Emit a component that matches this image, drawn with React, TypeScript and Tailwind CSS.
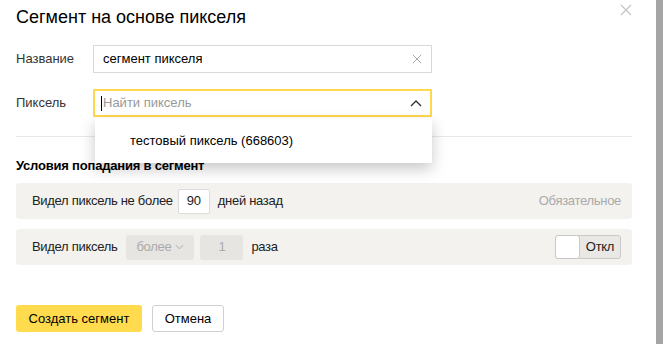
import React from 'react';

const font = { fontFamily: '"Liberation Sans", Arial, sans-serif' };

const CloseIcon = ({ className }: { className?: string }) => (
  <svg viewBox="0 0 12 12" className={className} fill="none" stroke="currentColor" strokeWidth="1.2">
    <path d="M1 1l10 10M11 1L1 11" />
  </svg>
);

export default function App() {
  return (
    <div className="flex h-[344px] w-[663px] overflow-hidden bg-white text-[13px] text-[#222]" style={font}>
      {/* Dialog */}
      <div className="relative w-[656px] pl-4 pr-[24px]">
        <div className="flex h-[40px] items-start justify-between pt-[3px]">
          <h1 className="pt-[2px] text-[18px] font-normal leading-[24px] text-black">Сегмент на основе пикселя</h1>
          <CloseIcon className="mt-[1px] h-[12px] w-[12px] text-[#c4c4c4]" />
        </div>

        {/* Name */}
        <div className="mt-[5px] flex items-center">
          <span className="w-[77px] text-[#333]">Название</span>
          <div className="flex h-[28px] w-[339px] items-center justify-between border border-[#d9d9d9] px-[9px]">
            <span className="text-black">сегмент пикселя</span>
            <CloseIcon className="h-[10px] w-[10px] text-[#aaa]" />
          </div>
        </div>

        {/* Pixel */}
        <div className="mt-[16px] flex items-center">
          <span className="w-[77px] text-[#333]">Пиксель</span>
          <div className="flex h-[28px] w-[339px] items-center justify-between border-2 border-[#ffd84d] px-[6px]">
            <div className="flex items-center">
              <span className="h-[15px] w-px bg-black" />
              <span className="ml-[1px] text-[#999]">Найти пиксель</span>
            </div>
            <svg viewBox="0 0 12 8" className="mr-[2px] h-[8px] w-[12px] text-[#333]" fill="none" stroke="currentColor" strokeWidth="1.4">
              <path d="M1 7l5-5 5 5" />
            </svg>
          </div>
        </div>

        <div className="mt-[19px] h-px bg-[#e8e8e8]" />

        <h2 className="mt-[21px] text-[13px] font-bold leading-[16px] tracking-[-0.2px] text-black">Условия попадания в сегмент</h2>

        {/* Conditions */}
        <div className="mt-[9px] flex h-[36px] items-center justify-between rounded-[3px] bg-[#f3f2ef] pl-[16px] pr-[11px] tracking-[-0.3px]">
          <div className="flex items-center">
            <span>Видел пиксель не более</span>
            <span className="ml-[5px] flex h-[25px] w-[32px] items-center justify-center rounded-[2px] border border-[#dcdcdc] bg-white">90</span>
            <span className="ml-[8px]">дней назад</span>
          </div>
          <span className="text-[#aaa]">Обязательное</span>
        </div>

        <div className="mt-[10px] flex h-[36px] items-center justify-between rounded-[3px] bg-[#f3f2ef] pl-[16px] pr-[11px] tracking-[-0.3px]">
          <div className="flex items-center">
            <span>Видел пиксель</span>
            <span className="ml-[9px] flex h-[25px] w-[68px] items-center justify-center gap-[4px] rounded-[3px] bg-[#e6e5e2] text-[#aaa]">
              более
              <svg viewBox="0 0 10 6" className="h-[6px] w-[9px]" fill="none" stroke="currentColor" strokeWidth="1.1">
                <path d="M1 1l4 4 4-4" />
              </svg>
            </span>
            <span className="ml-[6px] flex h-[25px] w-[43px] items-center justify-center rounded-[3px] bg-[#e6e5e2] text-[#aaa]">1</span>
            <span className="ml-[8px]">раза</span>
          </div>
          <div className="flex h-[24px] w-[66px] items-center rounded-[3px] border border-[#c9c9c9] bg-[#e9e8e5]">
            <span className="h-[24px] w-[25px] -ml-px rounded-[3px] border border-[#c9c9c9] bg-white" />
            <span className="flex-1 text-center text-[#222]">Откл</span>
          </div>
        </div>

        {/* Actions */}
        <div className="mt-[40px] flex gap-[10px]">
          <button className="h-[27px] w-[126px] rounded-[3px] bg-[#ffdb4d] text-[13px] text-black">Создать сегмент</button>
          <button className="h-[27px] w-[72px] rounded-[3px] border border-[#d0d0d0] bg-white text-[13px] text-black">Отмена</button>
        </div>

        {/* Dropdown popup */}
        <div className="absolute left-[95px] top-[118px] flex h-[45px] w-[337px] items-center bg-white pl-[35px] shadow-[0_6px_14px_rgba(0,0,0,0.22)]">
          <span className="text-black">тестовый пиксель (668603)</span>
        </div>
      </div>

      {/* Page scrollbar strip */}
      <div className="h-full w-[7px] bg-[#a5a5a5]" />
    </div>
  );
}
